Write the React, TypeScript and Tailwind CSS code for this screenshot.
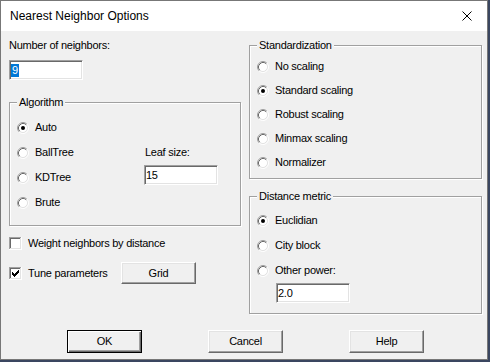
import React from "react";

const font = { fontFamily: '"Liberation Sans", Arial, sans-serif' };

function RadioIcon({ checked }: { checked?: boolean }) {
  return (
    <svg width="12" height="12" viewBox="0 0 12 12" className="shrink-0">
      <circle cx="6" cy="6" r="4.5" fill="#ffffff" />
      <path d="M2.11 9.89A5.5 5.5 0 0 1 9.89 2.11" stroke="#a0a0a0" fill="none" />
      <path d="M9.89 2.11A5.5 5.5 0 0 1 2.11 9.89" stroke="#ffffff" fill="none" />
      <path d="M2.82 9.18A4.5 4.5 0 0 1 9.18 2.82" stroke="#696969" fill="none" />
      <path d="M9.18 2.82A4.5 4.5 0 0 1 2.82 9.18" stroke="#e3e3e3" fill="none" />
      {checked && <circle cx="6" cy="6" r="2" fill="#000000" />}
    </svg>
  );
}

function Radio({ label, checked }: { label: string; checked?: boolean }) {
  return (
    <div className="flex h-[13px] items-center gap-[6px]">
      <RadioIcon checked={checked} />
      <span className="leading-[13px]">{label}</span>
    </div>
  );
}

function CheckIcon({ checked }: { checked?: boolean }) {
  const cols = [
    [3, 5],
    [4, 6],
    [5, 7],
    [6, 6],
    [7, 5],
    [8, 4],
    [9, 3],
  ];
  return (
    <svg width="13" height="13" viewBox="0 0 13 13" className="shrink-0" shapeRendering="crispEdges">
      <rect x="0" y="0" width="13" height="13" fill="#ffffff" />
      <rect x="0" y="0" width="12" height="1" fill="#a0a0a0" />
      <rect x="0" y="0" width="1" height="12" fill="#a0a0a0" />
      <rect x="1" y="1" width="10" height="1" fill="#696969" />
      <rect x="1" y="1" width="1" height="10" fill="#696969" />
      <rect x="1" y="11" width="11" height="1" fill="#e3e3e3" />
      <rect x="11" y="1" width="1" height="11" fill="#e3e3e3" />
      {checked &&
        cols.map(([x, y]) => <rect key={x} x={x} y={y} width="1" height="3" fill="#000000" />)}
    </svg>
  );
}

function Check({ label, checked }: { label: string; checked?: boolean }) {
  return (
    <div className="flex h-[13px] items-center gap-[6px]">
      <CheckIcon checked={checked} />
      <span className="leading-[13px]">{label}</span>
    </div>
  );
}

function Group({
  label,
  className,
  children,
}: {
  label: string;
  className: string;
  children: React.ReactNode;
}) {
  return (
    <div
      className={
        "relative border border-[#a0a0a0] shadow-[inset_1px_1px_0_#ffffff,1px_1px_0_#ffffff] " + className
      }
    >
      <span className="absolute -top-[7px] left-[7px] bg-[#f0f0f0] px-[2px] leading-[13px]">{label}</span>
      {children}
    </div>
  );
}

function Input({ className, children }: { className: string; children: React.ReactNode }) {
  return (
    <div
      className={
        "flex h-[20px] w-[74px] items-center border border-t-[#a0a0a0] border-l-[#a0a0a0] border-b-white border-r-white bg-white pl-[1px] shadow-[inset_1px_1px_0_#696969,inset_-1px_-1px_0_#e3e3e3] " +
        className
      }
    >
      {children}
    </div>
  );
}

function Button({ label, def, className }: { label: string; def?: boolean; className?: string }) {
  const cls = def
    ? "border border-black shadow-[inset_1px_1px_0_#ffffff,inset_-1px_-1px_0_#696969,inset_-2px_-2px_0_#a0a0a0]"
    : "border border-t-white border-l-white border-b-[#696969] border-r-[#696969] shadow-[inset_-1px_-1px_0_#a0a0a0,inset_1px_1px_0_#e3e3e3]";
  return (
    <div className={"flex w-[75px] items-center justify-center bg-[#f0f0f0] leading-[13px] " + cls + " " + (className ?? "")}>
      {label}
    </div>
  );
}

export default function App() {
  return (
    <div className="h-[362px] w-[490px] overflow-hidden bg-[#3a4660]" style={font}>
      <div className="flex h-[360px] w-[488px] flex-col border border-[#777777] text-[11px] tracking-[-0.25px] text-black">
        <div className="flex h-[30px] items-center justify-between bg-white pl-[9px] pr-[8px]">
          <span className="text-[12px] tracking-normal">Nearest Neighbor Options</span>
          <svg width="10" height="10" viewBox="0 0 10 10" className="mr-[7px]">
            <path d="M0.5 0.5L9.5 9.5M9.5 0.5L0.5 9.5" stroke="#000000" strokeWidth="1" />
          </svg>
        </div>
        <div className="flex flex-1 flex-col bg-[#f0f0f0]">
          <div className="flex items-start gap-[8px] pl-[8px]">
            {/* Left column */}
            <div className="flex w-[232px] flex-col">
              <div className="mt-[8px] leading-[13px]">Number of neighbors:</div>
              <Input className="mt-[8px]">
                <span className="bg-[#0078d7] px-[1px] leading-[13px] text-white">9</span>
              </Input>
              <Group label="Algorithm" className="mt-[22px] flex h-[124px]">
                <div className="flex w-[134px] flex-col gap-[12px] pl-[7px] pt-[18px]">
                  <Radio label="Auto" checked />
                  <Radio label="BallTree" />
                  <Radio label="KDTree" />
                  <Radio label="Brute" />
                </div>
                <div className="flex flex-col pt-[43px]">
                  <div className="pl-[1px] leading-[13px]">Leaf size:</div>
                  <Input className="mt-[6px]">
                    <span className="leading-[13px]">15</span>
                  </Input>
                </div>
              </Group>
              <div className="mt-[11px]">
                <Check label="Weight neighbors by distance" />
              </div>
              <div className="mt-[12px] flex h-[22px] items-center">
                <div className="w-[112px]">
                  <Check label="Tune parameters" checked />
                </div>
                <Button label="Grid" className="h-[22px]" />
              </div>
            </div>
            {/* Right column */}
            <div className="flex w-[233px] flex-col">
              <Group label="Standardization" className="mt-[14px] flex h-[134px] flex-col gap-[11px] pl-[7px] pt-[14px]">
                <Radio label="No scaling" />
                <Radio label="Standard scaling" checked />
                <Radio label="Robust scaling" />
                <Radio label="Minmax scaling" />
                <Radio label="Normalizer" />
              </Group>
              <Group label="Distance metric" className="mt-[17px] flex h-[118px] flex-col pl-[7px] pt-[17px]">
                <div className="flex flex-col gap-[12px]">
                  <Radio label="Euclidian" checked />
                  <Radio label="City block" />
                  <Radio label="Other power:" />
                </div>
                <Input className="ml-[19px] mt-[6px]">
                  <span className="leading-[13px]">2.0</span>
                </Input>
              </Group>
            </div>
          </div>
          <div className="mt-[16px] flex gap-[66px] pl-[66px]">
            <Button label="OK" def className="h-[23px]" />
            <Button label="Cancel" className="h-[23px]" />
            <Button label="Help" className="h-[23px]" />
          </div>
        </div>
      </div>
    </div>
  );
}
